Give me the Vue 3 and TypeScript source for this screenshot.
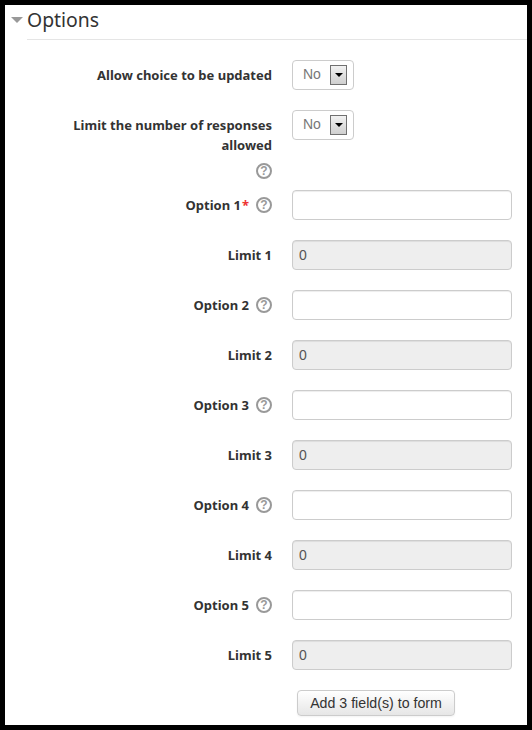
<template>
  <div class="frame">
    <div class="legend">
      <span class="caret"></span>
      <h3 class="legend-title">Options</h3>
    </div>

    <div class="form">
      <div class="row">
        <div class="label"><label>Allow choice to be updated</label></div>
        <div class="fake-select">
          <span class="fake-value">No</span>
          <span class="fake-arrow"><i></i></span>
        </div>
      </div>

      <div class="row row-tall">
        <div class="label">
          <label>Limit the number of responses allowed</label>
          <div class="help-line"><span class="help">?</span></div>
        </div>
        <div class="fake-select">
          <span class="fake-value">No</span>
          <span class="fake-arrow"><i></i></span>
        </div>
      </div>

      <template v-for="n in 5" :key="n">
        <div class="row">
          <div class="label label-inline">
            <label>Option {{ n }}</label>
            <span v-if="n === 1" class="req">*</span>
            <span class="help">?</span>
          </div>
          <input class="text-input" type="text" />
        </div>
        <div class="row">
          <div class="label label-inline"><label>Limit {{ n }}</label></div>
          <input class="text-input" type="text" value="0" disabled />
        </div>
      </template>

      <div class="actions">
        <button class="add-button" type="button">Add 3 field(s) to form</button>
      </div>
    </div>
  </div>
</template>

<script setup lang="ts">
</script>

<style>
html, body {
  margin: 0;
  background: #000;
}
</style>

<style scoped>
.frame {
  box-sizing: border-box;
  width: 522px;
  height: 720px;
  margin: 5px;
  background: #fff;
  overflow: hidden;
  font-family: "Noto Sans", sans-serif;
  color: #333;
}

.legend {
  display: flex;
  align-items: center;
  height: 34px;
  margin-left: 6px;
}

.caret {
  width: 0;
  height: 0;
  margin-top: -4px;
  border-left: 6px solid transparent;
  border-right: 6px solid transparent;
  border-top: 6px solid #999;
}

.legend-title {
  flex: 1;
  box-sizing: border-box;
  height: 35px;
  margin: 0 0 0 4px;
  padding-top: 1px;
  border-bottom: 1px solid #e5e5e5;
  font-size: 19.4px;
  line-height: 27px;
  font-weight: 400;
  color: #333;
}

.form {
  padding-top: 21px;
}

.row {
  display: grid;
  grid-template-columns: 267px 220px;
  column-gap: 20px;
  height: 30px;
  margin-bottom: 20px;
  align-items: start;
}

.row-tall {
  height: 70px;
  margin-bottom: 10px;
}

.label {
  padding-top: 5px;
  font-size: 13px;
  line-height: 20px;
  font-weight: 700;
  text-align: right;
  color: #333;
}

.label label {
  display: inline-block;
  max-width: 205px;
}

.label-inline {
  display: flex;
  justify-content: flex-end;
  align-items: center;
}

.help-line {
  display: flex;
  justify-content: flex-end;
  padding-top: 8px;
}

.help {
  box-sizing: border-box;
  display: inline-flex;
  align-items: center;
  justify-content: center;
  width: 16px;
  height: 16px;
  margin-left: 7px;
  border: 2px solid #999;
  border-radius: 50%;
  font-family: "Liberation Sans", sans-serif;
  font-size: 12px;
  font-weight: 700;
  line-height: 1;
  color: #999;
}

.req {
  margin-left: 1px;
  color: #e33;
  font-size: 13px;
  font-weight: 700;
}

.fake-select {
  box-sizing: border-box;
  display: flex;
  align-items: center;
  justify-content: space-between;
  width: 62px;
  height: 30px;
  padding: 0 6px 0 10px;
  background: #fff;
  border: 1px solid #ccc;
  border-radius: 4px;
  font-family: "Liberation Sans", sans-serif;
  font-size: 14px;
  color: #777;
}

.fake-value {
  margin-top: -2px;
}

.fake-arrow {
  box-sizing: border-box;
  display: flex;
  align-items: center;
  justify-content: center;
  width: 17px;
  height: 20px;
  border: 1px solid #707070;
  background: linear-gradient(#f2f2f2, #cfcfcf);
}

.fake-arrow i {
  width: 0;
  height: 0;
  border-left: 4px solid transparent;
  border-right: 4px solid transparent;
  border-top: 4px solid #000;
}

.text-input {
  box-sizing: border-box;
  width: 220px;
  height: 30px;
  margin: 0;
  padding: 4px 6px;
  background: #fff;
  border: 1px solid #ccc;
  border-radius: 4px;
  font-family: "Liberation Sans", sans-serif;
  font-size: 14px;
  color: #555;
  box-shadow: inset 0 1px 1px rgba(0, 0, 0, 0.075);
}

.text-input:disabled {
  background: #eee;
  color: #555;
}

.actions {
  padding-left: 292px;
}

.add-button {
  box-sizing: border-box;
  display: block;
  width: 158px;
  height: 26px;
  padding: 0;
  background: linear-gradient(#fff, #e6e6e6);
  border: 1px solid #ccc;
  border-radius: 4px;
  box-shadow: 0 1px 2px rgba(0, 0, 0, 0.05);
  font-family: "Liberation Sans", sans-serif;
  font-size: 14.2px;
  color: #333;
}
</style>
